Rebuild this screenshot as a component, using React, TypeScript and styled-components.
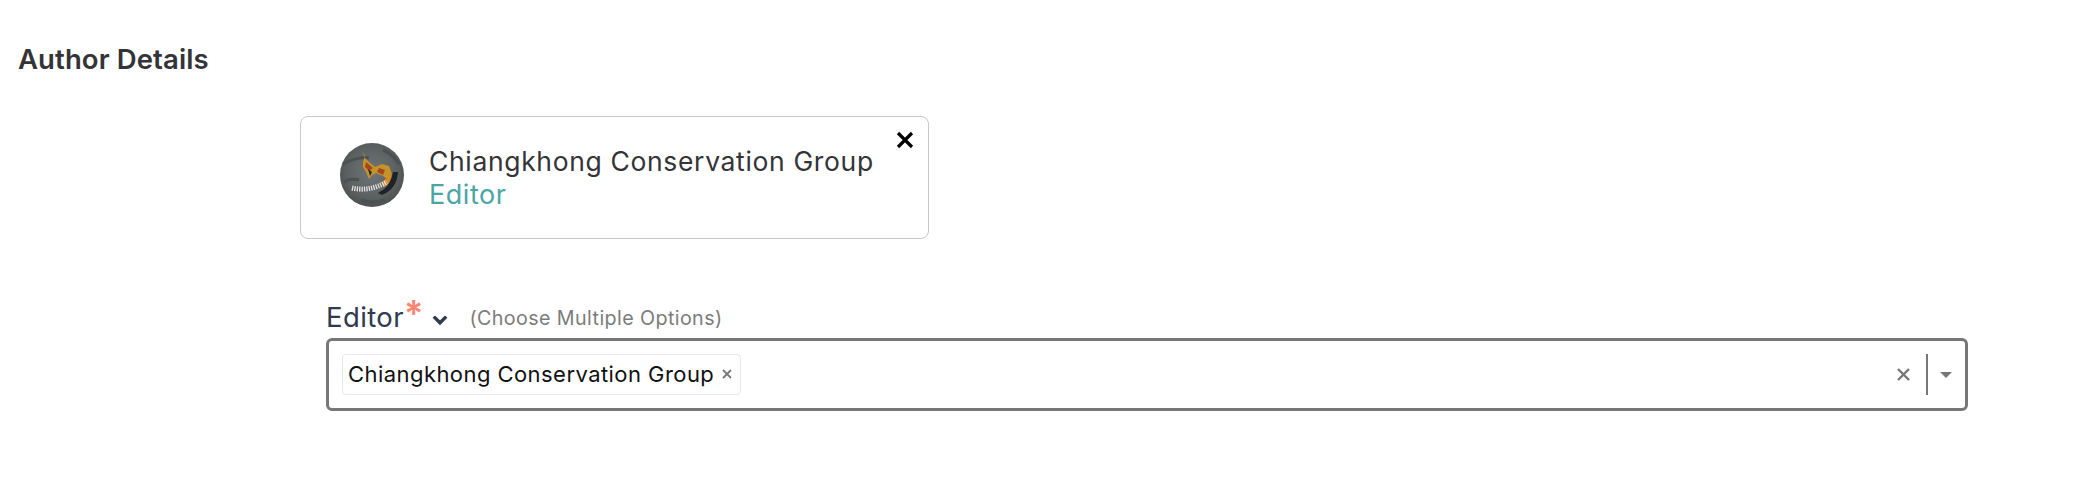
import React from "react";
import styled, { createGlobalStyle } from "styled-components";

const Global = createGlobalStyle`
  html, body { margin: 0; padding: 0; background: #fff; }
  body { font-family: Inter, "Liberation Sans", sans-serif; }
`;

const Page = styled.div`
  width: 2094px;
  height: 502px;
  box-sizing: border-box;
  padding: 44px 0 0 18px;
  overflow: hidden;
`;

const Heading = styled.h2`
  margin: 0;
  font-size: 27.5px;
  line-height: 30px;
  font-weight: 600;
  letter-spacing: 0.1px;
  color: #333338;
`;

const Card = styled.div`
  position: relative;
  box-sizing: border-box;
  width: 629px;
  height: 123px;
  margin: 42px 0 0 282px;
  padding: 25px 0 0 38px;
  border: 1px solid #c8c8c8;
  border-radius: 8px;
  display: flex;
  gap: 24px;
`;

const Avatar = styled.svg`
  width: 66px;
  height: 66px;
  flex: none;
`;

const CardText = styled.div`
  display: flex;
  flex-direction: column;
  padding-top: 3px;
`;

const Name = styled.div`
  font-size: 26.5px;
  line-height: 32px;
  letter-spacing: 0.65px;
  color: #333338;
  white-space: nowrap;
`;

const Role = styled.div`
  font-size: 27px;
  line-height: 33px;
  padding-top: 1px;
  letter-spacing: 0.55px;
  color: #4aa6a4;
`;

const Close = styled.svg`
  position: absolute;
  top: 13px;
  right: 13px;
  width: 20px;
  height: 20px;
`;

const Field = styled.div`
  margin: 57px 0 0 308px;
  width: 1642px;
`;

const LabelRow = styled.div`
  display: flex;
  align-items: baseline;
  height: 42px;
`;

const Label = styled.span`
  font-size: 27.5px;
  line-height: 42px;
  letter-spacing: 0.4px;
  color: #2f3a4f;
`;

const Star = styled.span`
  font-size: 36px;
  line-height: 20px;
  font-weight: 600;
  color: #fb8573;
  position: relative;
  top: -1px;
`;

const Chevron = styled.svg`
  width: 18px;
  height: 18px;
  margin: 0 20px 0 8px;
  align-self: center;
  position: relative;
  top: 3px;
`;

const Hint = styled.span`
  position: relative;
  top: -2px;
  font-size: 19.7px;
  letter-spacing: 0.4px;
  color: #7c7c7c;
`;

const SelectBox = styled.div`
  box-sizing: border-box;
  width: 100%;
  height: 73px;
  border: 3px solid #777;
  border-radius: 6px;
  display: flex;
  align-items: center;
  padding: 0 13px 0 13px;
`;

const Tag = styled.div`
  box-sizing: border-box;
  height: 41px;
  width: 399px;
  display: flex;
  align-items: center;
  padding: 0 8px 2px 5px;
  border: 1px solid #e4e8f0;
  border-radius: 4px;
  font-size: 22px;
  letter-spacing: 0.44px;
  color: #111;
  white-space: nowrap;
  justify-content: space-between;
`;

const TagX = styled.svg`
  width: 10px;
  height: 10px;
  flex: none;
`;

const Spacer = styled.div`
  flex: 1;
`;

const ClearX = styled.svg`
  width: 13px;
  height: 13px;
  flex: none;
`;

const Divider = styled.div`
  width: 2px;
  height: 41px;
  background: #777;
  margin: 0 12px 0 16px;
`;

const Caret = styled.div`
  width: 0;
  height: 0;
  border-left: 6px solid transparent;
  border-right: 6px solid transparent;
  border-top: 6px solid #777;
`;

export default function App() {
  return (
    <Page>
      <Global />
      <Heading>Author Details</Heading>
      <Card>
        <Avatar viewBox="0 0 66 66">
          <defs>
            <radialGradient id="stone" cx="50%" cy="45%" r="60%">
              <stop offset="0" stopColor="#70757a" />
              <stop offset="0.7" stopColor="#5a5f5e" />
              <stop offset="1" stopColor="#474b4b" />
            </radialGradient>
            <clipPath id="disc"><circle cx="33" cy="33" r="32" /></clipPath>
          </defs>
          <circle cx="33" cy="33" r="32" fill="url(#stone)" />
          <g clipPath="url(#disc)">
            <path d="M4 22 Q20 14 30 16 M5 40 Q10 36 20 38 M44 8 Q54 12 60 22 M22 58 Q34 62 46 58" stroke="#4b5050" strokeWidth="3" fill="none" />
            <path d="M59 30 Q58 47 43 53 L39 51 Q52 45 54 30 Z" fill="#1f2226" />
            <path d="M23 9 L26 14 L24 20 L24 25 L27 30 L30 37 L33 33 L37 31 L44 34 L48 37 L53 32 L50 24 L43 22 L36 25 L30 20 L26 16 Z" fill="#c2942a" />
            <path d="M27 20 L34 26 L30 29 L26 25 Z M40 26 L46 28 L44 33 L38 30 Z" fill="#a8441f" />
            <path d="M49 34 L53 33 L50 41 L45 45 L43 41 Z" fill="#d98a1f" />
            <path d="M29 27 L33 30 L31 34 Z" fill="#2a2622" />
            <path d="M13 46 Q30 50 48 40" stroke="#e4e4e2" strokeWidth="5" strokeDasharray="1.3 1.1" fill="none" />
          </g>
        </Avatar>
        <CardText>
          <Name>Chiangkhong Conservation Group</Name>
          <Role>Editor</Role>
        </CardText>
        <Close viewBox="0 0 20 20">
          <path d="M3 3 L17 17 M17 3 L3 17" stroke="#000" strokeWidth="3.2" />
        </Close>
      </Card>
      <Field>
        <LabelRow>
          <Label>Editor</Label>
          <Star>*</Star>
          <Chevron viewBox="0 0 16 16">
            <path d="M2.5 5 L8 10.5 L13.5 5" stroke="#2f3a4f" strokeWidth="3" fill="none" />
          </Chevron>
          <Hint>(Choose Multiple Options)</Hint>
        </LabelRow>
        <SelectBox>
          <Tag>
            Chiangkhong Conservation Group
            <TagX viewBox="0 0 10 10">
              <path d="M1 1 L9 9 M9 1 L1 9" stroke="#777" strokeWidth="1.8" />
            </TagX>
          </Tag>
          <Spacer />
          <ClearX viewBox="0 0 13 13">
            <path d="M1 1 L12 12 M12 1 L1 12" stroke="#777" strokeWidth="2.4" />
          </ClearX>
          <Divider />
          <Caret />
        </SelectBox>
      </Field>
    </Page>
  );
}
